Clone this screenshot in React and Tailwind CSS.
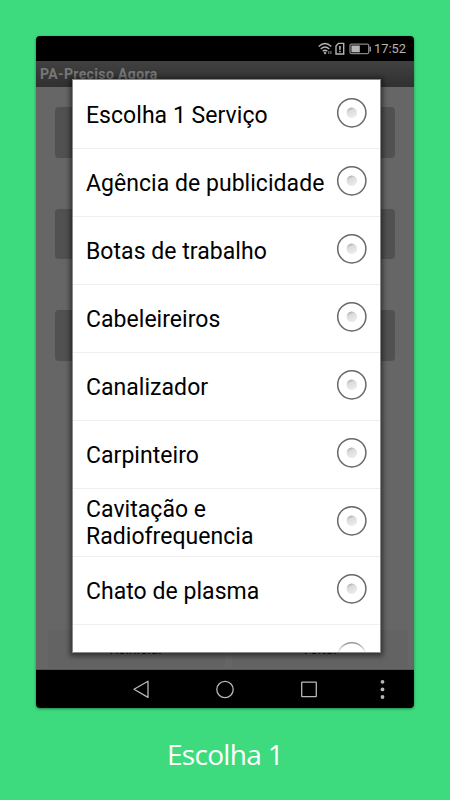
const services = [
  'Escolha 1 Serviço',
  'Agência de publicidade',
  'Botas de trabalho',
  'Cabeleireiros',
  'Canalizador',
  'Carpinteiro',
  'Cavitação e Radiofrequencia',
  'Chato de plasma',
];

function Radio() {
  return (
    <svg className="block h-8 w-8 shrink-0" viewBox="0 0 32 32" fill="none">
      <defs>
        <linearGradient id="dot" x1="0.2" y1="0" x2="0.6" y2="1">
          <stop offset="0" stopColor="#999" />
          <stop offset="0.3" stopColor="#dadada" />
          <stop offset="1" stopColor="#ededed" />
        </linearGradient>
      </defs>
      <circle cx="15.8" cy="15.8" r="14.1" stroke="#686868" strokeWidth="1.5" />
      <circle cx="15.8" cy="15.8" r="5.2" fill="url(#dot)" />
    </svg>
  );
}

function StatusBar() {
  return (
    <div className="flex h-[25px] items-center justify-end bg-black pr-[7px] text-[#b5b5b5]">
      <svg className="h-4 w-[54px]" viewBox="0 0 54 16" fill="none" stroke="currentColor" strokeWidth="1.3">
        <path d="M.7 5.4Q7-.3 13.3 5.4M2.7 7.9Q7 4 11.3 7.9M4.7 10.2Q7 8.2 9.3 10.2" />
        <path d="M5.5 12 7 13.5 8.5 12 7 10.6Z" fill="currentColor" stroke="none" />
        <path d="M10.8 10v3M12.9 10v3" strokeWidth=".8" />
        <path d="M20.4 2.4h5.3v10.6h-7.7V5.1Z" strokeWidth="1.4" />
        <path d="M21.9 5v3.7M21.9 9.7v1.6" strokeWidth="1.6" />
        <rect x="32" y="3.1" width="18.7" height="9.6" rx="1.5" stroke="#858585" />
        <rect x="33.4" y="4.5" width="8.4" height="6.8" fill="currentColor" stroke="none" />
        <path d="M52.2 5.5v5" stroke="#999" strokeWidth="1.5" />
      </svg>
      <span className="ml-[2px] w-[33px] text-[12.8px] leading-4 whitespace-nowrap">17:52</span>
    </div>
  );
}

function NavBar() {
  return (
    <div className="h-[38px] bg-black">
      <svg className="block h-[38px] w-full" viewBox="0 0 378 38" fill="none" stroke="#b8b8b8" strokeWidth="1.3">
        <path d="M98 19.3 112 11.2v16.2Z" strokeLinejoin="round" />
        <circle cx="189" cy="19.5" r="8.2" />
        <rect x="265.7" y="12.1" width="14.6" height="14.6" rx=".5" />
        <g fill="#b8b8b8" stroke="none">
          <circle cx="346.5" cy="11.8" r="1.9" />
          <circle cx="346.5" cy="19.4" r="1.9" />
          <circle cx="346.5" cy="27" r="1.9" />
        </g>
      </svg>
    </div>
  );
}

function ServiceDialog() {
  return (
    <div className="absolute top-[43px] left-[36px] h-[574px] w-[309px] overflow-hidden border border-[#8b8b8b] bg-white pt-px shadow-[0_1px_5px_2px_rgba(0,0,0,0.5)]">
      <ul>
        {services.map((name) => (
          <li
            key={name}
            className="flex h-[68px] items-center justify-between border-b border-[#efefef] pr-3 pl-[13px]"
          >
            <span className="w-[245px] pt-px text-[23px] leading-[27px] tracking-[0.04px] text-black">{name}</span>
            <div className="-ml-4 pb-1">
              <Radio />
            </div>
          </li>
        ))}
        <li className="relative flex h-[68px] justify-end pt-4 pr-3">
          <Radio />
          <div className="absolute inset-x-0 top-[13px] h-[15px] bg-gradient-to-b from-white/0 to-white" />
        </li>
      </ul>
    </div>
  );
}

export default function App() {
  return (
    <main className="flex h-[800px] w-[450px] flex-col items-center overflow-hidden bg-[#3ddb7e] pt-9 font-['Roboto',sans-serif]">
      <div className="relative h-[672px] w-[378px] shrink-0 rounded shadow-[0_1px_3px_rgba(0,0,0,0.4)]">
        <div className="flex h-full flex-col overflow-hidden rounded">
          <StatusBar />
          <div className="h-[26px] bg-gradient-to-b from-[#414141] to-[#303030] pl-1 text-[14px] leading-[27px] font-bold tracking-[0.37px] text-[#777]">
            PA-Preciso Agora
          </div>
          <div className="flex flex-1 flex-col border-b border-[#555] bg-[#666] pt-5">
            <div className="mx-[19px] flex flex-col gap-[51px]">
              <div className="h-[51px] rounded bg-[#515151]" />
              <div className="h-[50px] rounded bg-[#515151]" />
              <div className="h-[51px] rounded bg-[#515151]" />
            </div>
            <div className="mr-[6px] ml-3 mt-auto mb-[1px] flex h-[38px] gap-[7px] text-center text-[14px] leading-[39px] text-black">
              <div className="flex-1 rounded-xs bg-[#636363]">Reiniciar</div>
              <div className="flex-1 rounded-xs bg-[#636363]">Voltar</div>
            </div>
          </div>
          <NavBar />
        </div>
        <ServiceDialog />
      </div>
      <p className="mt-[27px] font-['Open_Sans',sans-serif] text-[28px] leading-[38px] font-normal tracking-[-0.7px] text-white">
        Escolha 1
      </p>
    </main>
  );
}
